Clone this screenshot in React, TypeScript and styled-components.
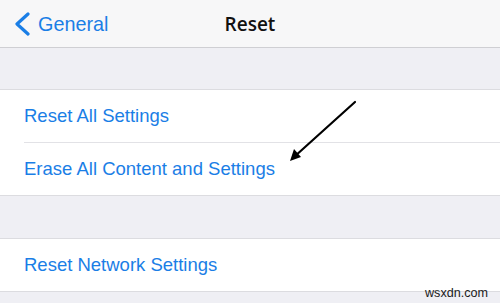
import React from "react";
import styled, { createGlobalStyle } from "styled-components";

const Global = createGlobalStyle`
  html, body { margin: 0; padding: 0; background: #efeff4; }
  body { font-family: "Liberation Sans", Arial, sans-serif; -webkit-font-smoothing: antialiased; }
`;

const Page = styled.div`
  position: relative;
  width: 500px;
  height: 303px;
  overflow: hidden;
  background: #efeff4;
`;

const NavBar = styled.header`
  height: 47px;
  background: #f7f7f8;
  border-bottom: 1px solid #cfcfd3;
  display: grid;
  grid-template-columns: 1fr auto 1fr;
  align-items: center;
`;

const BackButton = styled.div`
  display: flex;
  align-items: center;
  gap: 7px;
  padding-left: 14px;
  color: #1a7ee6;
  font-size: 19.8px;
  margin-top: 1px;
`;

const Title = styled.h1`
  margin: 0;
  font-family: "Open Sans", "Liberation Sans", sans-serif;
  font-size: 19px;
  font-weight: 600;
  color: #111;
`;

const Spacer = styled.div<{ $h: number }>`
  height: ${(p) => p.$h}px;
`;

const Group = styled.section`
  background: #fff;
  border-top: 1px solid #dcdce0;
  border-bottom: 1px solid #dcdce0;
`;

const RowWrap = styled.div`
  padding-left: 24px;
`;

const Row = styled.div<{ $divider?: boolean }>`
  height: 52px;
  display: flex;
  align-items: center;
  color: #1a7ee6;
  font-size: 18.5px;
  border-bottom: ${(p) => (p.$divider ? "1px solid #e2e2e6" : "none")};
`;

const Arrow = styled.svg`
  position: absolute;
  left: 284px;
  top: 96px;
`;

const Watermark = styled.div`
  position: absolute;
  right: 12px;
  top: 286px;
  font-size: 12.6px;
  color: #1a1a1a;
`;

export default function App() {
  return (
    <Page>
      <Global />
      <NavBar>
        <BackButton>
          <svg width="17" height="24" viewBox="0 0 17 24">
            <path d="M14 2 L3 12 L14 22" fill="none" stroke="#1a7ee6" strokeWidth="3.2" strokeLinecap="round" strokeLinejoin="round" />
          </svg>
          General
        </BackButton>
        <Title>Reset</Title>
        <div />
      </NavBar>
      <Spacer $h={41} />
      <Group>
        <RowWrap>
          <Row $divider>Reset All Settings</Row>
        </RowWrap>
        <RowWrap>
          <Row>Erase All Content and Settings</Row>
        </RowWrap>
      </Group>
      <Spacer $h={42} />
      <Group>
        <RowWrap>
          <Row>Reset Network Settings</Row>
        </RowWrap>
      </Group>
      <Arrow width="80" height="72" viewBox="0 0 80 72">
        <line x1="71" y1="6" x2="10" y2="61" stroke="#000" strokeWidth="2.2" strokeLinecap="round" />
        <path d="M6 65 L10 53 L17 61 Z" fill="#000" />
      </Arrow>
      <Watermark>wsxdn.com</Watermark>
    </Page>
  );
}
